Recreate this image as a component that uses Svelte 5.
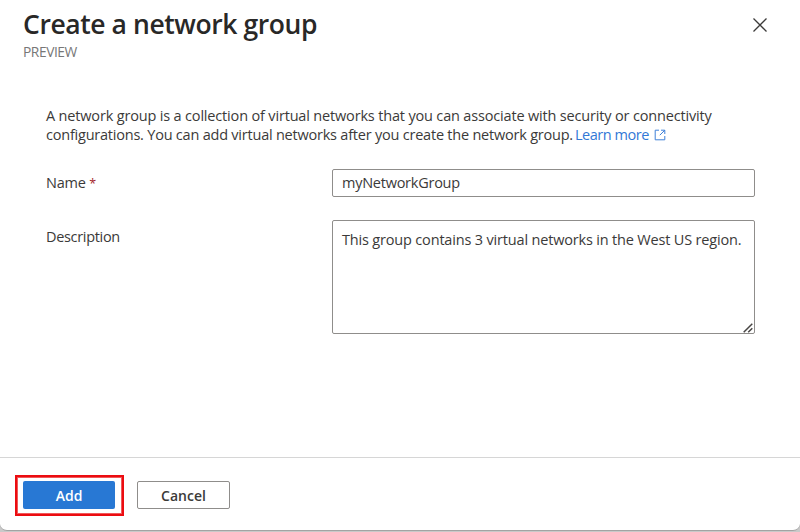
<script>
  let name = $state('myNetworkGroup');
  let description = $state('This group contains 3 virtual networks in the West US region.');
</script>

<div class="backdrop">
  <section class="panel">
    <header>
      <div>
        <h1>Create a network group</h1>
        <div class="preview">PREVIEW</div>
      </div>
      <button class="close" aria-label="Close">
        <svg width="16" height="16" viewBox="0 0 16 16"><path d="M1.5 1.5 14.5 14.5M14.5 1.5 1.5 14.5" fill="none" stroke="#3b3a39" stroke-width="1.3" /></svg>
      </button>
    </header>
    <main>
      <p>
        <span class="l1">A network group is a collection of virtual networks that you can associate with security or connectivity</span><br />
        <span class="l2">configurations. You can add virtual networks after you create the network group.</span><a href="#learn"><span>Learn more</span><svg width="12" height="12" viewBox="0 0 12 12"><path d="M5 1.2H1.2V10.8H10.8V7M7 1.2H10.8V5M10.8 1.2 5.8 6.2" fill="none" stroke="#3f80d8" stroke-width="1" /></svg></a>
      </p>
      <div class="row">
        <label for="name"><span class="ln">Name</span> <span class="star">*</span></label>
        <input id="name" bind:value={name} />
      </div>
      <div class="row area">
        <label for="description"><span class="ld">Description</span></label>
        <div class="box">
          <textarea id="description" bind:value={description} spellcheck="false"></textarea>
          <svg class="grip" width="10" height="10" viewBox="0 0 10 10"><path d="M.7 9.3 9.3.7M5.2 9.3 9.3 5.2" fill="none" stroke="#484644" stroke-width="1.5" /></svg>
        </div>
      </div>
    </main>
    <footer>
      <div class="highlight"><button class="add">Add</button></div>
      <button class="cancel">Cancel</button>
    </footer>
  </section>
</div>

<style>
  .backdrop { width: 800px; height: 532px; overflow: hidden; background: #c9c9c9; font-family: "Open Sans", "Noto Sans", sans-serif; color: #3b3a39; }
  .backdrop * { box-sizing: border-box; }
  .panel { width: 800px; height: 531px; display: flex; flex-direction: column; background: #fff; border-bottom: 1px solid #a3a3a3; border-radius: 0 0 7px 7px; }
  header { height: 106px; flex: none; display: flex; justify-content: space-between; padding: 7px 32px 0 23px; }
  h1 { margin: 0; height: 36px; font-size: 26.5px; line-height: 35px; font-weight: 600; letter-spacing: -0.42px; color: #292827; white-space: nowrap; }
  .preview { font-size: 13.8px; line-height: 17px; letter-spacing: -0.45px; color: #777; }
  button { font: inherit; padding: 0; }
  .close { width: 16px; height: 16px; margin-top: 10px; border: 0; background: none; display: flex; }
  main { flex: 1; padding: 0 45px 0 46px; font-size: 14.5px; }
  p { margin: 0 0 23px; height: 40px; line-height: 19px; white-space: nowrap; }
  .l1 { letter-spacing: -0.17px; }
  .l2 { letter-spacing: -0.22px; }
  a { color: #3278d6; text-decoration: none; margin-left: 2px; letter-spacing: -0.45px; }
  a svg { margin-left: 5px; vertical-align: -1px; }
  .row { display: flex; }
  label { width: 286px; height: 28px; line-height: 28px; white-space: nowrap; }
  .ln { letter-spacing: -0.25px; }
  .ld { letter-spacing: -0.32px; }
  .star { color: #a4262c; font-size: 12.5px; }
  input, textarea { display: block; width: 423px; border: 1px solid #8f8d8b; border-radius: 2px; outline: 0; background: #fff; font: inherit; color: #3b3a39; padding: 0 9px; }
  input { height: 28px; padding-bottom: 2px; letter-spacing: -0.25px; }
  .area { margin-top: 23px; }
  .area label { line-height: 33px; }
  .box { position: relative; }
  textarea { height: 114px; padding: 9px 4px 0 9px; line-height: 19px; letter-spacing: -0.175px; resize: none; overflow: hidden; }
  .grip { position: absolute; right: 2px; bottom: 1px; }
  footer { height: 73px; flex: none; display: flex; border-top: 1px solid #d6d6d6; padding: 17px 0 0 15px; font-size: 14px; font-weight: 600; }
  .highlight { width: 109px; height: 41px; border: 2.5px solid #ec0c10; outline: 0.5px solid #f0585a; outline-offset: -3px; padding: 4px 6px; }
  .add, .cancel { height: 28px; width: 92px; border-radius: 2px; display: block; }
  .add { border: 0; background: #2878d4; color: #fff; }
  .cancel { margin: 6px 0 0 13px; width: 93px; border: 1px solid #8f8d8b; background: #fff; color: #3b3a39; }
</style>
